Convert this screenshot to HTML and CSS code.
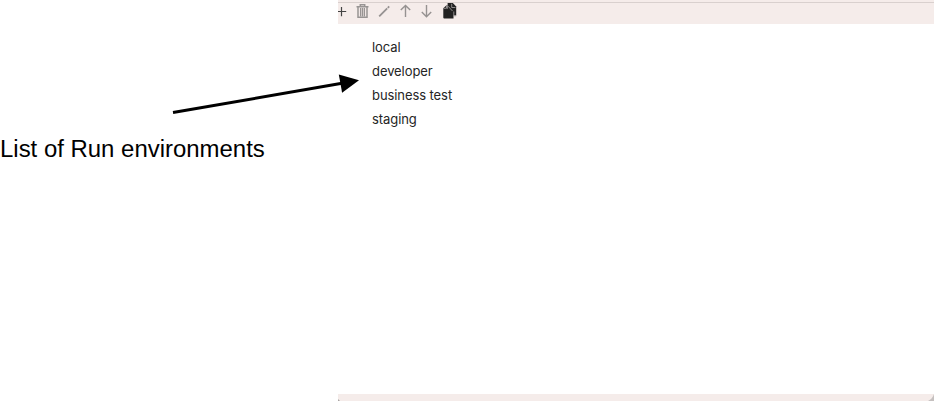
FILE: index.html
```html
<!DOCTYPE html>
<html lang="en">
<head>
<meta charset="utf-8">
<title>Run environments</title>
<link rel="stylesheet" href="styles.css">
</head>
<body>
<div class="page">
  <aside class="note">List of Run environments</aside>
  <main class="panel">
    <header class="toolbar">
      <svg class="icon icon-add" width="9" height="18" viewBox="0 0 9 18"><path d="M0 8.5H8.2M3.5 4V13.2" stroke="#444" stroke-width="1.2"/></svg>
      <svg class="icon" width="13" height="18" viewBox="0 0 13 18"><g fill="none" stroke="#989493" stroke-width="1.5"><path d="M.5 3.7H12.5M4.3 3.5V1.8H8.7V3.5M2 4.5V14.2H11V4.5"/><path d="M4.6 5V13.5M6.5 5V13.5M8.4 5V13.5" stroke-width="1.3"/></g></svg>
      <svg class="icon icon-edit" width="12" height="18" viewBox="0 0 12 18"><path d="M1.2 13.4L9.2 5.4M9.8 4.8L11.2 3.4" stroke="#969291" stroke-width="1.8"/></svg>
      <svg class="icon icon-up" width="11" height="18" viewBox="0 0 11 18"><path d="M5.5 14V2.8M.8 7.1L5.5 2.4L10.2 7.1" fill="none" stroke="#969291" stroke-width="1.4"/></svg>
      <svg class="icon icon-down" width="11" height="18" viewBox="0 0 11 18"><path d="M5.5 2V13.4M.8 9.1L5.5 13.8L10.2 9.1" fill="none" stroke="#969291" stroke-width="1.4"/></svg>
      <svg class="icon icon-copy" width="14" height="18" viewBox="0 0 14 18"><path d="M.3 5.2L3.2 2.5H10.5V15.4H1.3Q.3 15.4 .3 14.4Z" fill="#222"/><path d="M4.6 0H9.8L13.2 3.6V12.5H4.6Z" fill="#222"/><path d="M.8 5.3H3.5V2.6M4.4 2.5V5.8M5 3.2L9.5 8M8.7 .8V4.5H12.4M10.8 8.5V12.9H13.2" fill="none" stroke="#aaa5a4" stroke-width=".8"/></svg>
    </header>
    <ul class="environments">
      <li>local</li>
      <li>developer</li>
      <li>business test</li>
      <li>staging</li>
    </ul>
    <footer class="footer">
      <svg class="corner" width="2" height="2" viewBox="0 0 2 2"><path d="M0 0L2 2H0Z" fill="#aaa5a4"/></svg>
      <svg class="corner" width="6" height="7" viewBox="0 0 6 7"><path d="M6 0V7H0Q4.5 5 6 0Z" fill="#c5c0bf"/></svg>
    </footer>
  </main>
  <svg class="pointer" width="190" height="50" viewBox="170 68 190 50"><path d="M173 112.6L342 83.3" stroke="#000" stroke-width="3"/><path d="M338.8 74.4L359 80.3L342.1 92.7Z"/></svg>
</div>
</body>
</html>
```
FILE: styles.css
```css
body {
  margin: 0;
  background: #fff;
}

.page {
  position: relative;
  display: grid;
  grid-template-columns: 338px 1fr;
  height: 401px;
  overflow: hidden;
}

.note {
  padding-top: 134px;
  font: 23.95px/30px "Liberation Sans", sans-serif;
  color: #000;
  white-space: nowrap;
}

.panel {
  display: grid;
  grid-template-rows: 24px 1fr 7px;
}

.toolbar {
  display: flex;
  align-items: flex-start;
  padding-top: 3px;
  background: linear-gradient(#d9d0ce, #d9d0ce) 0 2px / 100% 1px no-repeat #f5ecea;
}

.icon {
  display: block;
  flex: none;
  margin-right: 10px;
}

.icon-add {
  margin-right: 9px;
}

.icon-edit {
  margin-left: -1px;
}

.icon-down {
  margin-right: 11px;
}

.environments {
  margin: 0;
  padding: 11px 0 0 34px;
  list-style: none;
  font: 13px/24px Inter, sans-serif;
  letter-spacing: -0.08px;
  color: #252525;
}

.footer {
  display: flex;
  justify-content: space-between;
  align-items: flex-end;
  background: #f5ecea;
}

.corner {
  display: block;
}

.pointer {
  position: absolute;
  left: 170px;
  top: 68px;
}
```
